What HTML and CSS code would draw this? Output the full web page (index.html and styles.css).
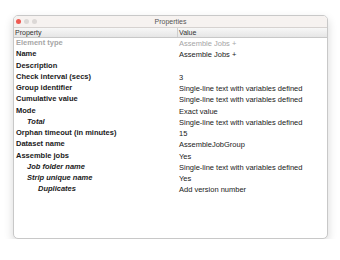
FILE: index.html
```html
<!DOCTYPE html>
<html lang="en">
<head>
  <meta charset="UTF-8">
  <title>Properties</title>
  <link rel="stylesheet" href="styles.css">
</head>
<body>
  <div class="window">
    <div class="titlebar">
      <div class="lights">
        <span class="light red"></span>
        <span class="light"></span>
        <span class="light"></span>
      </div>
      <div class="title">Properties</div>
    </div>
    <div class="header">
      <div class="col-prop">Property</div>
      <div class="col-val">Value</div>
    </div>
    <div class="rows">
      <div class="row dim"><div class="col-prop">Element type</div><div class="col-val">Assemble Jobs +</div></div>
      <div class="row"><div class="col-prop">Name</div><div class="col-val">Assemble Jobs +</div></div>
      <div class="row"><div class="col-prop">Description</div><div class="col-val"></div></div>
      <div class="row"><div class="col-prop">Check interval (secs)</div><div class="col-val">3</div></div>
      <div class="row"><div class="col-prop">Group identifier</div><div class="col-val">Single-line text with variables defined</div></div>
      <div class="row"><div class="col-prop">Cumulative value</div><div class="col-val">Single-line text with variables defined</div></div>
      <div class="row"><div class="col-prop">Mode</div><div class="col-val">Exact value</div></div>
      <div class="row sub"><div class="col-prop">Total</div><div class="col-val">Single-line text with variables defined</div></div>
      <div class="row"><div class="col-prop">Orphan timeout (in minutes)</div><div class="col-val">15</div></div>
      <div class="row"><div class="col-prop">Dataset name</div><div class="col-val">AssembleJobGroup</div></div>
      <div class="row"><div class="col-prop">Assemble jobs</div><div class="col-val">Yes</div></div>
      <div class="row sub"><div class="col-prop">Job folder name</div><div class="col-val">Single-line text with variables defined</div></div>
      <div class="row sub"><div class="col-prop">Strip unique name</div><div class="col-val">Yes</div></div>
      <div class="row sub2"><div class="col-prop">Duplicates</div><div class="col-val">Add version number</div></div>
    </div>
  </div>
</body>
</html>
```

FILE: styles.css
```css
body {
  margin: 0;
  background: #ffffff;
  font-family: "Liberation Sans", Arial, sans-serif;
  font-size: 7.5px;
  color: #1a1a1a;
}
.window {
  width: 313px;
  height: 222px;
  margin: 15px 0 0 13px;
  border: 1px solid #c8c8c8;
  border-radius: 5px;
  background: #ffffff;
  box-shadow: 0 4px 10px rgba(0, 0, 0, 0.16);
  overflow: hidden;
  display: flex;
  flex-direction: column;
}
.titlebar {
  height: 11px;
  background: #f6f2f0;
  border-bottom: 1px solid #d6d2d0;
  display: flex;
  align-items: center;
  position: relative;
}
.lights {
  display: flex;
  gap: 3px;
  padding-left: 2px;
}
.light {
  width: 5px;
  height: 5px;
  border-radius: 50%;
  background: #dcd8d6;
}
.light.red {
  background: #ee5a52;
}
.title {
  position: absolute;
  left: 0;
  right: 0;
  text-align: center;
  color: #555;
  font-size: 7px;
}
.header {
  display: flex;
  height: 9px;
  line-height: 9px;
  background: linear-gradient(#f7f7f7, #e6e6e6);
  border-bottom: 1px solid #c8c8c8;
  color: #333;
  font-size: 7px;
}
.header .col-prop {
  padding-left: 1px;
}
.header .col-val {
  border-left: 1px solid #cfcfcf;
  padding-left: 1px;
}
.col-prop {
  width: 163px;
  padding-left: 2px;
  box-sizing: border-box;
}
.col-val {
  flex: 1;
  padding-left: 2px;
}
.rows {
  margin-top: -1px;
}
.row {
  display: flex;
  height: 11.25px;
  line-height: 11.25px;
}
.row .col-prop {
  font-weight: bold;
}
.row .col-val {
  padding-top: 1px;
  padding-left: 2px;
}
.row.dim {
  color: #a6a6a6;
}
.row.sub .col-prop {
  padding-left: 13px;
  font-style: italic;
}
.row.sub2 .col-prop {
  padding-left: 24px;
  font-style: italic;
}
```
